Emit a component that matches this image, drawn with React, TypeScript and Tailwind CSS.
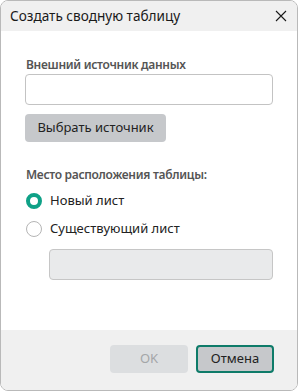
export default function App() {
  return (
    <div className="w-[298px] h-[391px] bg-white" style={{ fontFamily: '"Noto Sans", "Open Sans", sans-serif' }}>
      <div className="w-full h-full border border-[#b9b9b9] rounded-[8px] overflow-hidden flex flex-col bg-white">
        <div className="h-[30px] bg-[#f0f0f0] flex items-center justify-between pl-[9px] pr-[10px] shrink-0">
          <span className="text-[13.6px] text-[#1a1a1a]">Создать сводную таблицу</span>
          <svg width="12" height="12" viewBox="0 0 12 12" className="block">
            <path d="M1 1 L11 11 M11 1 L1 11" stroke="#1a1a1a" strokeWidth="1.1" />
          </svg>
        </div>
        <div className="flex-1 bg-white px-[24px] pt-[26px]">
          <div className="text-[12px] font-semibold text-[#555] leading-[16px] pl-[1px] tracking-[-0.3px]">Внешний источник данных</div>
          <div className="mt-[1px] h-[31px] w-[248px] border border-[#c3c3c3] rounded-[4px] bg-white"></div>
          <div className="mt-[9px] h-[28px] w-[141px] bg-[#c6c8cb] rounded-[4px] flex items-center justify-center text-[13px] text-[#222]">Выбрать источник</div>
          <div className="mt-[25px] text-[12px] font-semibold text-[#555] leading-[16px] pl-[1px] tracking-[-0.3px]">Место расположения таблицы:</div>
          <div className="mt-[9px] flex items-center h-[18px]">
            <div className="ml-[1px] w-[16px] h-[16px] rounded-full border-[4px] border-[#0fa187] bg-white"></div>
            <span className="ml-[8px] text-[13px] text-[#222]">Новый лист</span>
          </div>
          <div className="mt-[10px] flex items-center h-[18px]">
            <div className="ml-[1px] w-[16px] h-[16px] rounded-full border border-[#b5b5b5] bg-white"></div>
            <span className="ml-[8px] text-[13px] text-[#222]">Существующий лист</span>
          </div>
          <div className="mt-[11px] ml-[24px] h-[31px] w-[224px] border border-[#c6c6c6] rounded-[4px] bg-[#e9eaeb]"></div>
        </div>
        <div className="h-[60px] bg-[#f0f0f0] shrink-0 flex justify-end items-start pt-[15px] pr-[23px] gap-[8px]">
          <div className="h-[28px] w-[78px] bg-[#dcdee0] rounded-[4px] flex items-center justify-center text-[13px] text-[#a4a6a8]">OK</div>
          <div className="h-[28px] w-[78px] bg-[#c6c8cb] rounded-[4px] border-2 border-[#0e7b69] flex items-center justify-center text-[13px] text-[#222]">Отмена</div>
        </div>
      </div>
    </div>
  );
}
